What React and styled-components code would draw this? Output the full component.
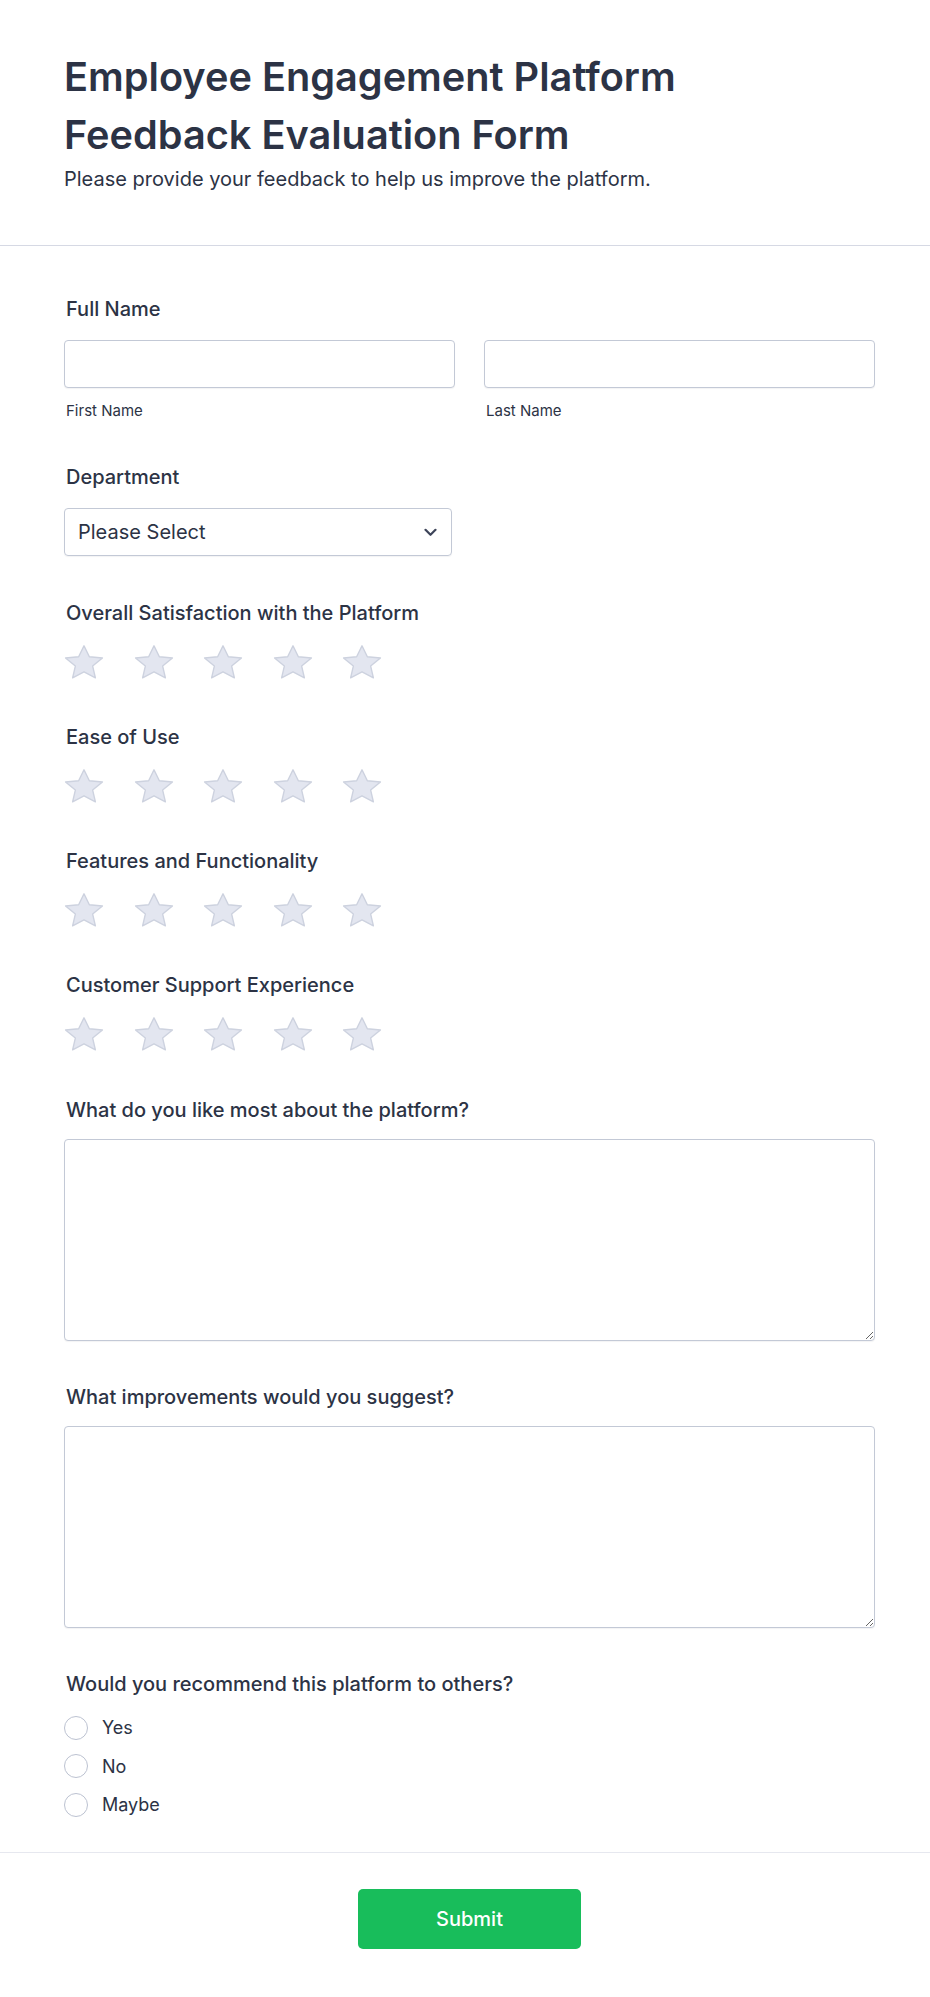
import React from "react";
import styled, { createGlobalStyle } from "styled-components";

const GlobalStyle = createGlobalStyle`
  body {
    margin: 0;
    background: #ffffff;
    color: #2c3345;
    font-family: Inter, "Noto Sans", "Liberation Sans", sans-serif;
  }
  * {
    box-sizing: border-box;
  }
`;

const Page = styled.div`
  width: 930px;
  min-height: 1997px;
  background: #ffffff;
`;

const Header = styled.header`
  padding: 48px 55px 52px 64px;
  border-bottom: 1px solid #d6d9e4;
`;

const Title = styled.h1`
  margin: 0;
  font-size: 39.7px;
  line-height: 58px;
  font-weight: 600;
  color: #2c3345;
  width: 720px;
`;

const Subtitle = styled.p`
  margin: 1px 0 0;
  font-size: 20px;
  line-height: 28px;
  font-weight: 400;
  color: #2c3345;
`;

const FormBody = styled.div`
  display: flex;
  flex-direction: column;
  gap: 43.3px;
  padding: 50px 55px 28px 64px;
`;

const Field = styled.div`
  display: flex;
  flex-direction: column;
`;

const Label = styled.label`
  font-size: 20px;
  line-height: 26px;
  font-weight: 500;
  color: #2c3345;
  padding-left: 2px;
  margin-bottom: ${(p) => p.$gap || 17}px;
`;

const NameRow = styled.div`
  display: grid;
  grid-template-columns: 1fr 1fr;
  column-gap: 29px;
`;

const NameCol = styled.div`
  display: flex;
  flex-direction: column;
`;

const TextInput = styled.input`
  height: 48px;
  width: 100%;
  border: 1px solid #c3c9d6;
  border-radius: 4px;
  box-shadow: 0 1px 1px rgba(43, 50, 69, 0.06);
  padding: 0 14px;
  font-family: inherit;
  font-size: 20px;
  color: #2c3345;
  outline: none;
`;

const SubLabel = styled.span`
  margin-top: 13px;
  padding-left: 2px;
  font-size: 15px;
  line-height: 20px;
  color: #2c3345;
`;

const SelectBox = styled.div`
  width: 388px;
  height: 48px;
  border: 1px solid #c3c9d6;
  border-radius: 4px;
  box-shadow: 0 1px 1px rgba(43, 50, 69, 0.06);
  display: flex;
  align-items: center;
  justify-content: space-between;
  padding: 0 14px 0 13px;
  font-size: 20px;
  color: #2c3345;
`;

const StarRow = styled.div`
  display: flex;
  gap: 29.5px;
  height: 38px;
  align-items: center;
`;

const StarIcon = styled.svg`
  width: 40px;
  height: 36px;
  display: block;
`;

const TextArea = styled.textarea`
  width: 100%;
  height: 202px;
  border: 1px solid #c3c9d6;
  border-radius: 4px;
  box-shadow: 0 1px 1px rgba(43, 50, 69, 0.06);
  padding: 10px 14px;
  font-family: inherit;
  font-size: 18px;
  color: #2c3345;
  outline: none;
  resize: vertical;
`;

const RadioList = styled.div`
  display: flex;
  flex-direction: column;
`;

const RadioRow = styled.label`
  display: flex;
  align-items: center;
  gap: 14px;
  height: 38.5px;
  font-size: 18px;
  color: #2c3345;
`;

const RadioCircle = styled.span`
  width: 24px;
  height: 24px;
  border-radius: 50%;
  border: 1.5px solid #bcc2d1;
  background: #ffffff;
  flex-shrink: 0;
`;

const Footer = styled.div`
  border-top: 1px solid #e6e8ef;
  padding: 36px 55px 50px 64px;
  display: flex;
  justify-content: center;
`;

const SubmitButton = styled.button`
  width: 223px;
  height: 60px;
  border: none;
  border-radius: 5px;
  background: #18bd5b;
  color: #ffffff;
  font-family: inherit;
  font-size: 20px;
  font-weight: 500;
  cursor: pointer;
`;

const Star = () => (
  <StarIcon viewBox="0 0 40 36">
    <polygon
      points="20,1.8 25.35,12.79 38.45,14.03 28.65,22.06 31.4,33.82 20,27.8 8.6,33.82 11.35,22.06 1.55,14.03 14.65,12.79"
      fill="#e3e6f0"
      stroke="#cdd2df"
      strokeWidth="1.4"
      strokeLinejoin="round"
    />
  </StarIcon>
);

const Chevron = () => (
  <svg width="13" height="9" viewBox="0 0 13 9">
    <path
      d="M1.5 1.8 L6.5 6.8 L11.5 1.8"
      fill="none"
      stroke="#3d4459"
      strokeWidth="2.2"
      strokeLinecap="round"
      strokeLinejoin="round"
    />
  </svg>
);

const ratings = [
  "Overall Satisfaction with the Platform",
  "Ease of Use",
  "Features and Functionality",
  "Customer Support Experience",
];

const questions = [
  "What do you like most about the platform?",
  "What improvements would you suggest?",
];

const App = () => {
  return (
    <Page>
      <GlobalStyle />
      <Header>
        <Title>Employee Engagement Platform Feedback Evaluation Form</Title>
        <Subtitle>Please provide your feedback to help us improve the platform.</Subtitle>
      </Header>
      <FormBody>
        <Field>
          <Label $gap={18}>Full Name</Label>
          <NameRow>
            <NameCol>
              <TextInput type="text" />
              <SubLabel>First Name</SubLabel>
            </NameCol>
            <NameCol>
              <TextInput type="text" />
              <SubLabel>Last Name</SubLabel>
            </NameCol>
          </NameRow>
        </Field>

        <Field>
          <Label $gap={18}>Department</Label>
          <SelectBox>
            <span>Please Select</span>
            <Chevron />
          </SelectBox>
        </Field>

        {ratings.map((r) => (
          <Field key={r}>
            <Label>{r}</Label>
            <StarRow>
              {[0, 1, 2, 3, 4].map((i) => (
                <Star key={i} />
              ))}
            </StarRow>
          </Field>
        ))}

        {questions.map((q) => (
          <Field key={q}>
            <Label $gap={16}>{q}</Label>
            <TextArea />
          </Field>
        ))}

        <Field>
          <Label $gap={11}>Would you recommend this platform to others?</Label>
          <RadioList>
            {["Yes", "No", "Maybe"].map((o) => (
              <RadioRow key={o}>
                <RadioCircle />
                {o}
              </RadioRow>
            ))}
          </RadioList>
        </Field>
      </FormBody>
      <Footer>
        <SubmitButton>Submit</SubmitButton>
      </Footer>
    </Page>
  );
};

export default App;
